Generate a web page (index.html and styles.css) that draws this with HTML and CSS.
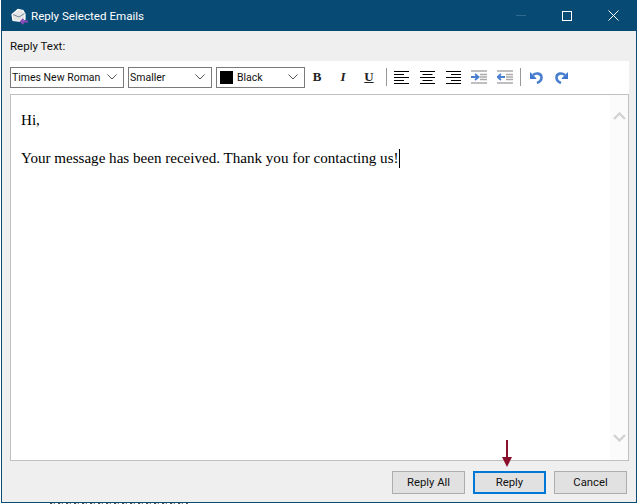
FILE: index.html
```html
<!DOCTYPE html>
<html lang="en">
<head>
<meta charset="utf-8">
<title>Reply Selected Emails</title>
<link rel="stylesheet" href="styles.css">
</head>
<body>
<div class="backdrop"></div>
<div class="window">
  <header class="titlebar">
    <svg class="app-icon" width="18" height="18" viewBox="0 0 18 18">
      <path d="M2 7.500 L8 2.500 L13 3.500 L15 7 L15 12.500 L11 14.500 L3 13.500 Z" fill="#e6e6e6" stroke="#fff" stroke-width="1.200"/>
      <path d="M3 7.500 L9 10 L14.500 6.500" fill="none" stroke="#74899a" stroke-width="1"/>
      <path d="M18 14.500 H11 M13.500 12 L11 14.500 L13.500 17" fill="none" stroke="#8b4cb8" stroke-width="1.800"/>
    </svg>
    <span class="title">Reply Selected Emails</span>
    <div class="controls">
      <svg width="10" height="2" viewBox="0 0 10 2"><path d="M0 .5H10" stroke="#2f6a8e"/></svg>
      <svg width="10" height="10" viewBox="0 0 10 10"><rect x=".5" y=".5" width="9" height="9" fill="none" stroke="#fff"/></svg>
      <svg width="11" height="11" viewBox="0 0 11 11"><path d="M.5 .5L10.500 10.500M10.500 .5L.5 10.500" stroke="#fff" stroke-width="1"/></svg>
    </div>
  </header>
  <main class="content">
    <div class="label">Reply Text:</div>
    <div class="toolbar">
      <div class="select font"><span>Times New Roman</span><svg class="chev" width="10" height="6" viewBox="0 0 10 6"><path d="M.5 .5L5 5L9.500 .5" fill="none" stroke="#555"/></svg></div>
      <div class="select size"><span>Smaller</span><svg class="chev" width="10" height="6" viewBox="0 0 10 6"><path d="M.5 .5L5 5L9.500 .5" fill="none" stroke="#555"/></svg></div>
      <div class="select color"><i class="swatch"></i><span>Black</span><svg class="chev" width="10" height="6" viewBox="0 0 10 6"><path d="M.5 .5L5 5L9.500 .5" fill="none" stroke="#555"/></svg></div>
      <div class="tools">
        <b class="fmt">B</b>
        <i class="fmt ital">I</i>
        <u class="fmt und">U</u>
        <span class="sep"></span>
        <svg class="tool" width="15" height="13" viewBox="0 0 15 13"><path d="M0 .5H15M0 3.500H10M0 6.500H15M0 9.500H10M0 12.500H15" stroke="#000"/></svg>
        <svg class="tool" width="15" height="13" viewBox="0 0 15 13"><path d="M0 .5H15M2.500 3.500H12.500M0 6.500H15M2.500 9.500H12.500M0 12.500H15" stroke="#000"/></svg>
        <svg class="tool tight" width="15" height="13" viewBox="0 0 15 13"><path d="M0 .5H15M5 3.500H15M0 6.500H15M5 9.500H15M0 12.500H15" stroke="#000"/></svg>
        <svg class="tool tight" width="16" height="14" viewBox="0 0 16 14"><path d="M0 1H16M0 13H16M9 4.500H16M9 7H16M9 9.500H16" stroke="#aaa" stroke-width="1.600"/><path d="M0 7H6M4 4L7.500 7L4 10" fill="none" stroke="#4a7fd0" stroke-width="1.800"/></svg>
        <svg class="tool tight" width="16" height="14" viewBox="0 0 16 14"><path d="M0 1H16M0 13H16M9 4.500H16M9 7H16M9 9.500H16" stroke="#aaa" stroke-width="1.600"/><path d="M8 7H2M4 4L.5 7L4 10" fill="none" stroke="#4a7fd0" stroke-width="1.800"/></svg>
        <span class="sep second"></span>
        <svg class="tool wide" width="13" height="14" viewBox="0 0 13 14"><path d="M0 2.500L6 8.500H0Z" fill="#3f76d0" stroke="#3f76d0"/><path d="M3 5C6 2.500 11.500 3 11.500 7.500C11.500 10 9.500 12 7 13" fill="none" stroke="#4a7fd0" stroke-width="2.600"/></svg>
        <svg class="tool" width="13" height="14" viewBox="0 0 13 14"><path d="M13 2.500L7 8.500H13Z" fill="#3f76d0" stroke="#3f76d0"/><path d="M10 5C7 2.500 1.500 3 1.500 7.500C1.500 10 3.500 12 6 13" fill="none" stroke="#4a7fd0" stroke-width="2.600"/></svg>
      </div>
    </div>
    <div class="editor">
      <div class="text">
        <p>Hi,</p>
        <p>Your message has been received. Thank you for contacting us!<span class="caret"></span></p>
      </div>
      <div class="scrollbar">
        <svg width="13" height="8" viewBox="0 0 13 8"><path d="M1 7L6.500 1.500L12 7" fill="none" stroke="#d2d2d2" stroke-width="2.400"/></svg>
        <svg width="13" height="8" viewBox="0 0 13 8"><path d="M1 1L6.500 6.500L12 1" fill="none" stroke="#d2d2d2" stroke-width="2.400"/></svg>
      </div>
    </div>
    <div class="actions">
      <button class="btn">Reply All</button>
      <button class="btn primary">Reply</button>
      <button class="btn">Cancel</button>
    </div>
  </main>
  <svg class="arrow" width="12" height="28" viewBox="0 0 12 28"><path d="M6 0V18" stroke="#8a0f2a" stroke-width="2"/><path d="M1 17H11L6 27Z" fill="#8a0f2a"/></svg>
</div>
</body>
</html>
```

FILE: styles.css
```css
* { box-sizing: border-box; }
html, body { margin: 0; height: 100%; background: #fff; overflow: hidden; }
body { font-family: Roboto, "Noto Sans", sans-serif; font-size: 11px; color: #111; }

.backdrop {
  position: absolute;
  left: 50px;
  top: 503px;
  width: 138px;
  height: 1px;
  background: repeating-linear-gradient(90deg, #555 0 2px, #ddd 2px 4px, #888 4px 5px, #fff 5px 8px);
}

.window {
  position: relative;
  width: 636px;
  height: 503px;
  margin-left: 1px;
  border: 1px solid #0a4a73;
  border-top: 0;
  background: #efefef;
  display: flex;
  flex-direction: column;
}

.titlebar {
  height: 31px;
  flex: none;
  background: #074a73;
  color: #fff;
  display: flex;
  align-items: center;
  padding-left: 8px;
}
.app-icon { margin-right: 3px; }
.title { font-size: 11.600px; }
.controls {
  margin-left: auto;
  display: flex;
  align-items: center;
  gap: 36px;
  padding-right: 17px;
}

.content { flex: 1; display: flex; flex-direction: column; padding: 0 7px 0 8px; }
.label { height: 30px; padding-top: 7px; line-height: 16px; font-size: 11.500px; }

.toolbar {
  height: 33px;
  flex: none;
  background: #fff;
  display: flex;
  align-items: center;
  gap: 4px;
  padding-bottom: 1px;
}
.select {
  height: 21px;
  border: 1px solid #7a7a7a;
  background: #fff;
  display: flex;
  align-items: center;
  padding: 0 6px 0 1px;
  font-size: 10.500px;
  white-space: nowrap;
}
.select span { flex: 1; }
.font { width: 114px; }
.size { width: 84px; }
.color { width: 89px; padding-left: 3px; }
.swatch { width: 13px; height: 13px; background: #000; margin-right: 4px; }

.tools { display: flex; align-items: center; margin-left: -5px; height: 100%; }
.fmt {
  width: 26px;
  text-align: center;
  font-family: "Liberation Serif", serif;
  font-size: 13px;
  font-weight: 700;
  line-height: 16px;
  color: #222;
}
.sep { width: 1px; height: 18px; background: #999; margin: 0 7px 0 4px; }
.second { margin: 0 9px 0 -3px; }
.tool { margin-right: 11px; }
.tool.tight { margin-right: 10px; }
.tool.wide { margin-right: 12px; }

.editor {
  height: 367px;
  flex: none;
  background: #fff;
  border: 1px solid #c0c0c0;
  display: flex;
}
.text {
  flex: 1;
  padding: 16px 10px;
  font-family: "Liberation Serif", serif;
  font-size: 15.080px;
  line-height: 19px;
  color: #000;
}
.text p { margin: 0 0 19px; }
.caret { display: inline-block; width: 1px; height: 19px; background: #000; vertical-align: -5px; }
.scrollbar {
  width: 18px;
  background: #fbfbfb;
  display: flex;
  flex-direction: column;
  justify-content: space-between;
  align-items: center;
  padding: 17px 0 18px;
}

.actions {
  display: flex;
  justify-content: flex-end;
  gap: 8px;
  padding: 10px 2px 0 0;
}
.btn {
  width: 73px;
  height: 23px;
  background: #e1e1e1;
  border: 1px solid #adadad;
  font: inherit;
  font-size: 11.300px;
  color: #111;
  padding: 0;
}
.primary { border: 2px solid #0078d7; }

.arrow { position: absolute; left: 499px; top: 440px; }
```
